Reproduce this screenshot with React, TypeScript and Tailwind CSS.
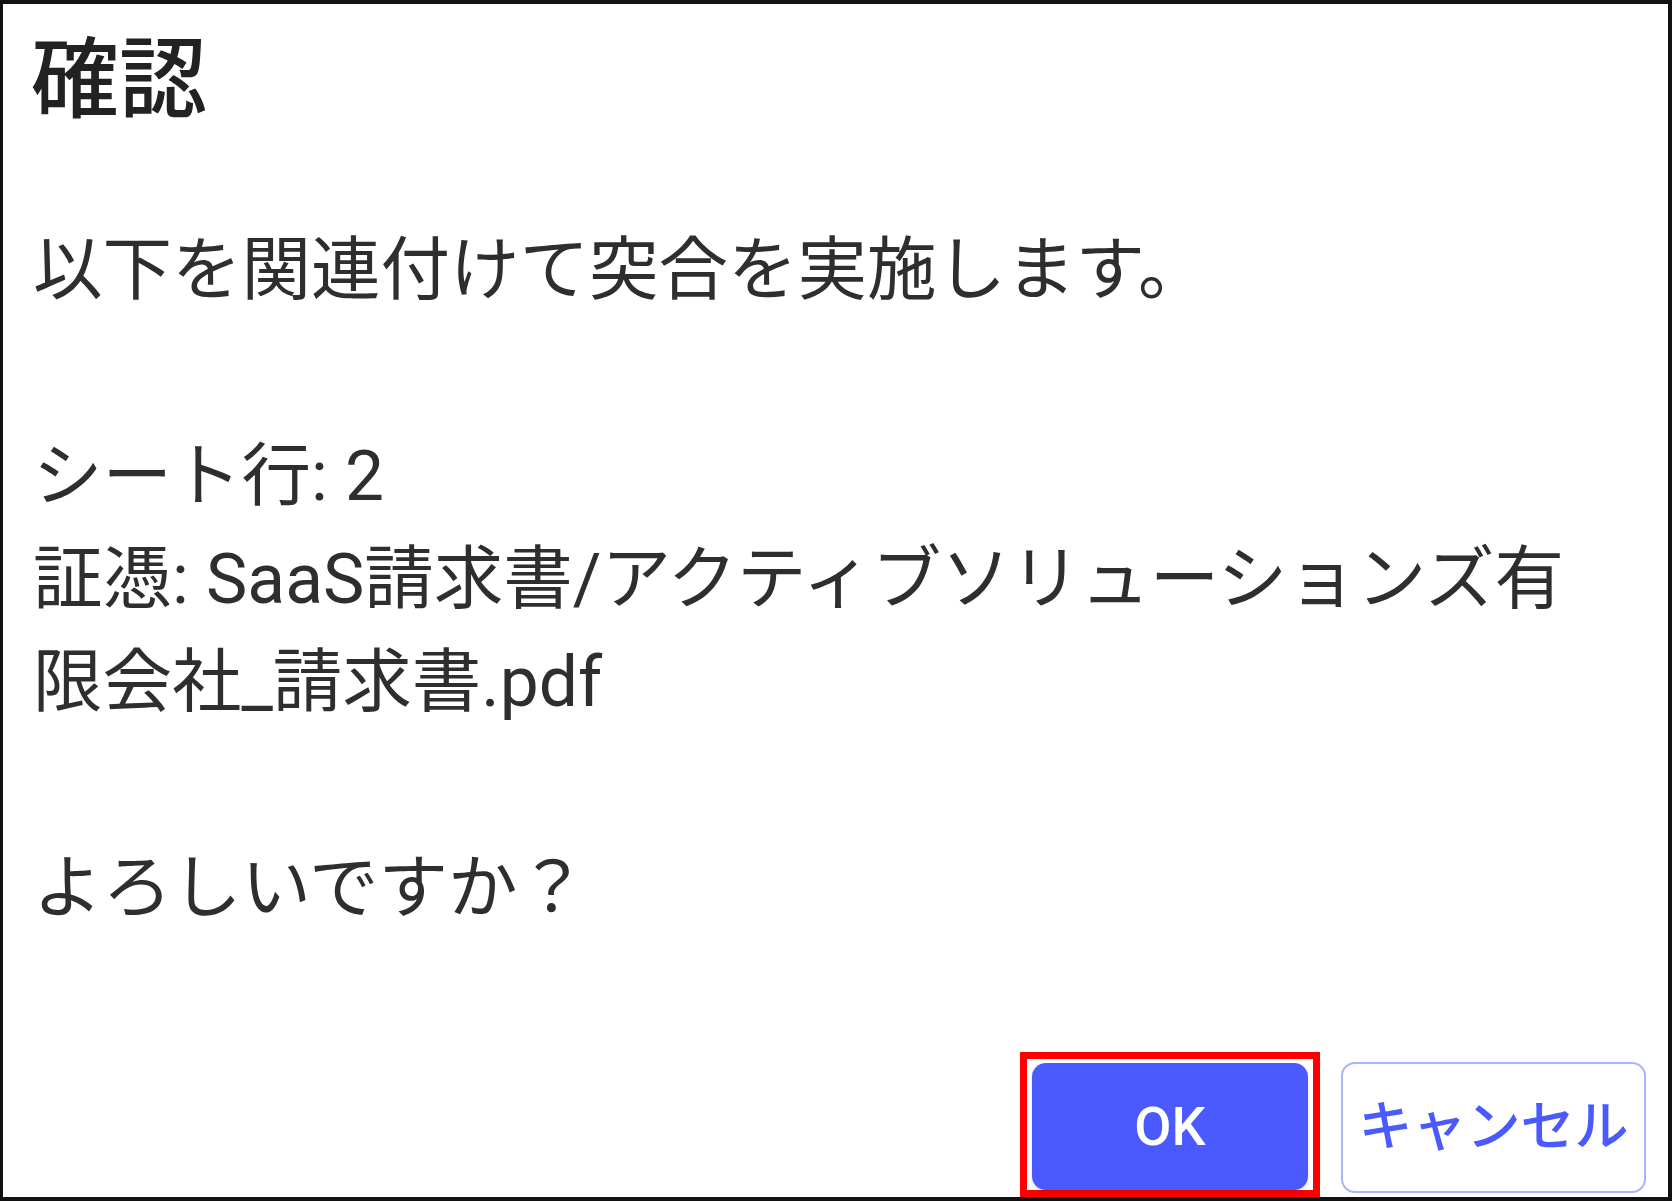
import React from 'react';

const ConfirmDialog: React.FC = () => {
  const body =
    '以下を関連付けて突合を実施します。\n\nシート行: 2\n証憑: SaaS請求書/アクティブソリューションズ有限会社_請求書.pdf\n\nよろしいですか？';

  return (
    <div
      className="w-[1672px] h-[1201px] bg-white border-[4px] border-l-[3px] border-[#111111] flex flex-col"
      style={{ fontFamily: 'Roboto, "Noto Sans CJK JP", sans-serif' }}
    >
      {/* Title */}
      <h1 className="pl-[28px] pt-[30px] text-[88px] leading-[92px] font-medium text-[#222222]">確認</h1>

      {/* Message */}
      <p className="pl-[30px] mt-[93px] w-[1600px] text-[69.5px] leading-[103px] text-[#2e2e2e] whitespace-pre-wrap">
        {body}
      </p>

      {/* Actions */}
      <div className="mt-auto flex justify-end items-end gap-[21px] pr-[22px]">
        <div className="border-[7px] border-[#ff0000] px-[5px] pt-[4px] pb-[0px]">
          <button className="w-[276px] h-[127px] rounded-[14px] bg-[#4a5aff] text-white text-[54px] font-medium shadow-md flex items-center justify-center">
            OK
          </button>
        </div>
        <button className="mb-[4px] w-[305px] h-[131px] rounded-[14px] border-[2px] border-[#a9b3ff] bg-white text-[#4a5aff] text-[54px] font-medium flex items-center justify-center">
          キャンセル
        </button>
      </div>
    </div>
  );
};

export default function App() {
  return <ConfirmDialog />;
}
